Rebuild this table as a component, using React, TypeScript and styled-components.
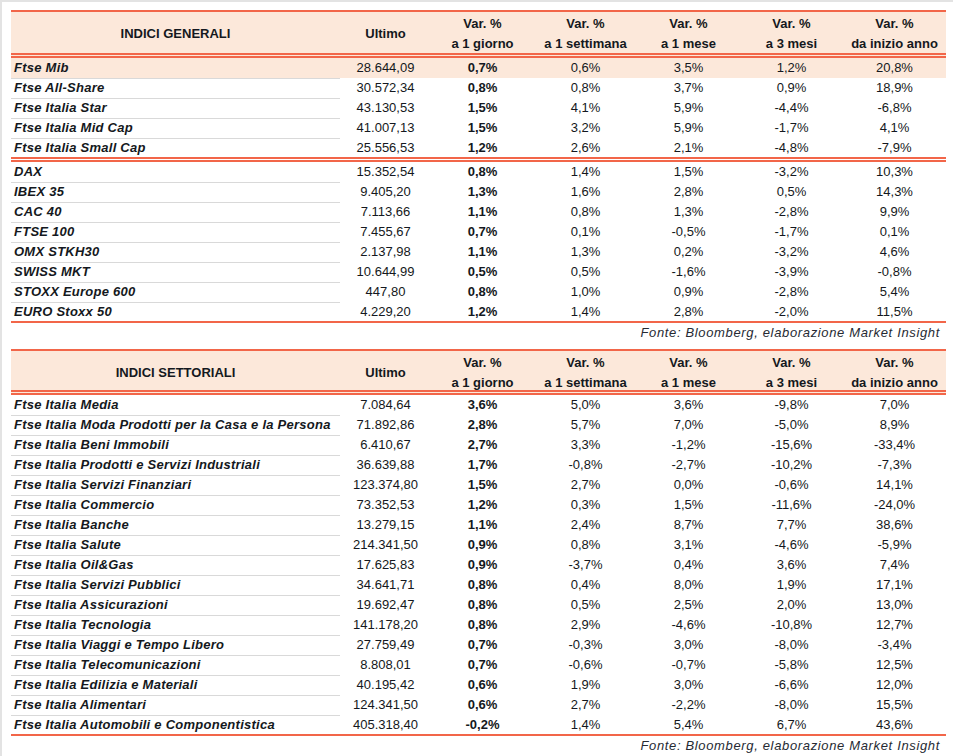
import styled, { createGlobalStyle } from "styled-components";

const RED = "#f26649";
const PEACH = "#fce8da";
const TEXT = "#141820";

const GlobalStyle = createGlobalStyle`
  html, body {
    margin: 0;
    padding: 0;
    background: #ffffff;
  }
  body {
    font-family: "Liberation Sans", Arial, sans-serif;
    font-size: 13px;
    color: ${TEXT};
  }
`;

const Page = styled.div`
  box-sizing: border-box;
  min-height: 100vh;
  border-top: 2px solid #e3e3e3;
  border-left: 2px solid #e3e3e3;
  padding: 8px 0 0 9px;
`;

const Sheet = styled.div`
  width: 935px;
`;

const COLS = "329px 91px repeat(5, 103px)";

const HeaderRow = styled.div<{ $tall?: boolean }>`
  display: grid;
  grid-template-columns: ${COLS};
  height: ${({ $tall }) => ($tall ? "41px" : "39px")};
  background: ${PEACH};
  border-top: 2px solid ${RED};
  border-bottom: 5px double ${RED};
`;

const HeaderCell = styled.div`
  display: flex;
  flex-direction: column;
  align-items: center;
  justify-content: center;
  padding-top: 2px;
  font-weight: 700;
  line-height: 20px;
  white-space: nowrap;
`;

const Row = styled.div<{ $highlight?: boolean; $end?: "double" | "single" }>`
  display: grid;
  grid-template-columns: ${COLS};
  height: ${({ $end }) => ($end ? "19px" : "20px")};
  background: ${({ $highlight }) => ($highlight ? PEACH : "transparent")};
  border-bottom: ${({ $end }) =>
    $end === "double" ? `5px double ${RED}` : $end === "single" ? `2px solid ${RED}` : "none"};
`;

const NameCell = styled.div<{ $ruled?: boolean }>`
  box-sizing: border-box;
  height: 100%;
  padding-left: 3px;
  font-weight: 700;
  font-style: italic;
  letter-spacing: 0.25px;
  line-height: 20px;
  white-space: nowrap;
  border-bottom: ${({ $ruled }) => ($ruled ? "1px solid #d9d9d9" : "none")};
`;

const ValueCell = styled.div<{ $bold?: boolean }>`
  text-align: center;
  line-height: 20px;
  font-weight: ${({ $bold }) => ($bold ? 700 : 400)};
  white-space: nowrap;
`;

const Source = styled.div<{ $gap?: boolean }>`
  height: 20px;
  line-height: 20px;
  text-align: right;
  padding-right: 6px;
  font-style: italic;
  letter-spacing: 0.65px;
  color: #262a33;
  margin-bottom: ${({ $gap }) => ($gap ? "6px" : "0")};
`;

type Line = [string, string, string, string, string, string, string];

const generaliA: Line[] = [
  ["Ftse Mib", "28.644,09", "0,7%", "0,6%", "3,5%", "1,2%", "20,8%"],
  ["Ftse All-Share", "30.572,34", "0,8%", "0,8%", "3,7%", "0,9%", "18,9%"],
  ["Ftse Italia Star", "43.130,53", "1,5%", "4,1%", "5,9%", "-4,4%", "-6,8%"],
  ["Ftse Italia Mid Cap", "41.007,13", "1,5%", "3,2%", "5,9%", "-1,7%", "4,1%"],
  ["Ftse Italia Small Cap", "25.556,53", "1,2%", "2,6%", "2,1%", "-4,8%", "-7,9%"],
];

const generaliB: Line[] = [
  ["DAX", "15.352,54", "0,8%", "1,4%", "1,5%", "-3,2%", "10,3%"],
  ["IBEX 35", "9.405,20", "1,3%", "1,6%", "2,8%", "0,5%", "14,3%"],
  ["CAC 40", "7.113,66", "1,1%", "0,8%", "1,3%", "-2,8%", "9,9%"],
  ["FTSE 100", "7.455,67", "0,7%", "0,1%", "-0,5%", "-1,7%", "0,1%"],
  ["OMX STKH30", "2.137,98", "1,1%", "1,3%", "0,2%", "-3,2%", "4,6%"],
  ["SWISS MKT", "10.644,99", "0,5%", "0,5%", "-1,6%", "-3,9%", "-0,8%"],
  ["STOXX Europe 600", "447,80", "0,8%", "1,0%", "0,9%", "-2,8%", "5,4%"],
  ["EURO Stoxx 50", "4.229,20", "1,2%", "1,4%", "2,8%", "-2,0%", "11,5%"],
];

const settoriali: Line[] = [
  ["Ftse Italia Media", "7.084,64", "3,6%", "5,0%", "3,6%", "-9,8%", "7,0%"],
  ["Ftse Italia Moda Prodotti per la Casa e la Persona", "71.892,86", "2,8%", "5,7%", "7,0%", "-5,0%", "8,9%"],
  ["Ftse Italia Beni Immobili", "6.410,67", "2,7%", "3,3%", "-1,2%", "-15,6%", "-33,4%"],
  ["Ftse Italia Prodotti e Servizi Industriali", "36.639,88", "1,7%", "-0,8%", "-2,7%", "-10,2%", "-7,3%"],
  ["Ftse Italia Servizi Finanziari", "123.374,80", "1,5%", "2,7%", "0,0%", "-0,6%", "14,1%"],
  ["Ftse Italia Commercio", "73.352,53", "1,2%", "0,3%", "1,5%", "-11,6%", "-24,0%"],
  ["Ftse Italia Banche", "13.279,15", "1,1%", "2,4%", "8,7%", "7,7%", "38,6%"],
  ["Ftse Italia Salute", "214.341,50", "0,9%", "0,8%", "3,1%", "-4,6%", "-5,9%"],
  ["Ftse Italia Oil&Gas", "17.625,83", "0,9%", "-3,7%", "0,4%", "3,6%", "7,4%"],
  ["Ftse Italia Servizi Pubblici", "34.641,71", "0,8%", "0,4%", "8,0%", "1,9%", "17,1%"],
  ["Ftse Italia Assicurazioni", "19.692,47", "0,8%", "0,5%", "2,5%", "2,0%", "13,0%"],
  ["Ftse Italia Tecnologia", "141.178,20", "0,8%", "2,9%", "-4,6%", "-10,8%", "12,7%"],
  ["Ftse Italia Viaggi e Tempo Libero", "27.759,49", "0,7%", "-0,3%", "3,0%", "-8,0%", "-3,4%"],
  ["Ftse Italia Telecomunicazioni", "8.808,01", "0,7%", "-0,6%", "-0,7%", "-5,8%", "12,5%"],
  ["Ftse Italia Edilizia e Materiali", "40.195,42", "0,6%", "1,9%", "3,0%", "-6,6%", "12,0%"],
  ["Ftse Italia Alimentari", "124.341,50", "0,6%", "2,7%", "-2,2%", "-8,0%", "15,5%"],
  ["Ftse Italia Automobili e Componentistica", "405.318,40", "-0,2%", "1,4%", "5,4%", "6,7%", "43,6%"],
];

const periods = ["a 1 giorno", "a 1 settimana", "a 1 mese", "a 3 mesi", "da inizio anno"];

function TableHeader({ title, tall }: { title: string; tall?: boolean }) {
  return (
    <HeaderRow $tall={tall}>
      <HeaderCell>{title}</HeaderCell>
      <HeaderCell>Ultimo</HeaderCell>
      {periods.map((p) => (
        <HeaderCell key={p}>
          <span>Var. %</span>
          <span>{p}</span>
        </HeaderCell>
      ))}
    </HeaderRow>
  );
}

function DataRows({
  lines,
  end,
  highlightFirst,
}: {
  lines: Line[];
  end: "double" | "single";
  highlightFirst?: boolean;
}) {
  return (
    <>
      {lines.map(([name, last, ...vars], i) => {
        const isLast = i === lines.length - 1;
        return (
          <Row key={name} $highlight={highlightFirst && i === 0} $end={isLast ? end : undefined}>
            <NameCell $ruled={!isLast}>{name}</NameCell>
            <ValueCell>{last}</ValueCell>
            {vars.map((v, j) => (
              <ValueCell key={j} $bold={j === 0}>
                {v}
              </ValueCell>
            ))}
          </Row>
        );
      })}
    </>
  );
}

export default function App() {
  return (
    <>
      <GlobalStyle />
      <Page>
        <Sheet>
          <TableHeader title="INDICI GENERALI" tall />
          <DataRows lines={generaliA} end="double" highlightFirst />
          <DataRows lines={generaliB} end="single" />
          <Source $gap>Fonte: Bloomberg, elaborazione Market Insight</Source>

          <TableHeader title="INDICI SETTORIALI" />
          <DataRows lines={settoriali} end="single" />
          <Source>Fonte: Bloomberg, elaborazione Market Insight</Source>
        </Sheet>
      </Page>
    </>
  );
}
